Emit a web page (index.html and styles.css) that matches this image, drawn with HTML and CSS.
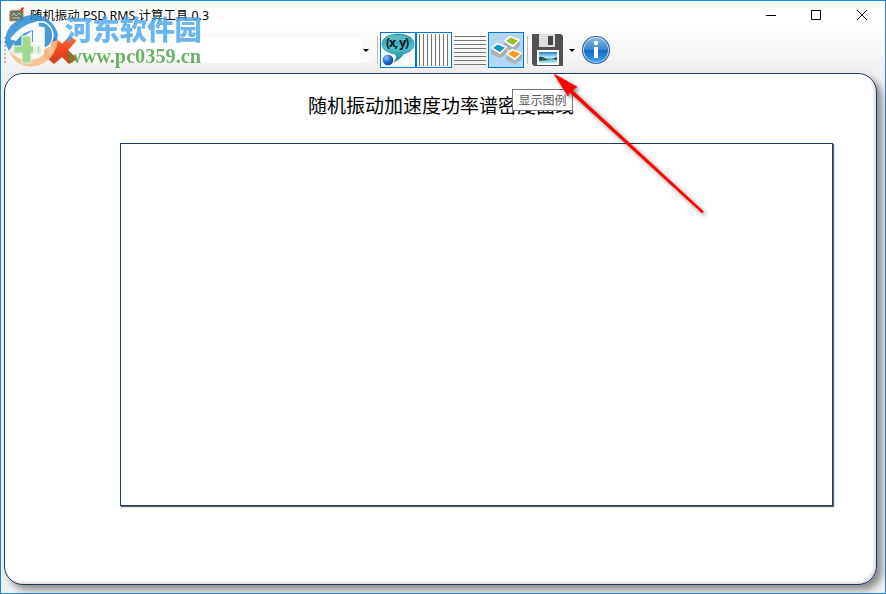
FILE: index.html
```
<!DOCTYPE html>
<html lang="zh-CN">
	<head>
		<meta charset="utf-8">
		<title>随机振动 PSD RMS 计算工具 0.3</title>
		<link rel="stylesheet" href="styles.css">
	</head>
	<body>
		<div class="window">
			<div class="titlebar">
				<svg class="app-icon" width="16" height="16" viewBox="0 0 16 16">
					<path d="M1 4L14 3V13L1 14Z" fill="#617564" stroke="#c27b49"/>
					<path d="M3 9L5 6L7 9L10 6L12 8M3 11H11" fill="none" stroke="#c8d0bb"/>
					<path d="M11 4L13 0L15 1L13 5Z" fill="#e73532"/>
				</svg>
				<svg class="caption" width="184" height="22">
					<text x="0" y="16" textLength="179" lengthAdjust="spacingAndGlyphs">随机振动 PSD RMS 计算工具 0.3</text>
				</svg>
				<svg class="controls" width="138" height="30" viewBox="0 0 138 30" fill="none" stroke="#000">
					<path d="M19 15.5H29M64.500 10.500H73.500V19.500H64.500ZM110 10L120 20M120 10L110 20"/>
				</svg>
			</div>
			<div class="toolbar">
				<div class="grip"></div>
				<svg class="tool" width="36" height="36" viewBox="0 0 36 36">
					<path d="M13 4H22V14H31V22H22V32H13V22H4V14H13Z" fill="#79c65b" stroke="#e7f1df" stroke-width="2"/>
				</svg>
				<svg class="tool" width="36" height="36" viewBox="0 0 36 36">
					<defs>
						<linearGradient id="cross" x2="0" y2="1">
							<stop offset="0" stop-color="#f96b3c"/>
							<stop offset=".5" stop-color="#f04a1c"/>
							<stop offset="1" stop-color="#c53d1c"/>
						</linearGradient>
					</defs>
					<path d="M9 5L17 12L25 4L31 9L23 18L32 27L24 32L17 25L9 32L2 26L10 18L4 11Z" fill="url(#cross)" stroke="#f08c68"/>
				</svg>
				<div class="combo"><i class="arrow"></i></div>
				<div class="separator"></div>
				<div class="tool checked light">
					<svg width="34" height="34" viewBox="0 0 34 34">
						<defs>
							<linearGradient id="bubble" x2="0" y2="1">
								<stop offset="0" stop-color="#2795a6"/>
								<stop offset=".5" stop-color="#52bed0"/>
								<stop offset="1" stop-color="#167d92"/>
							</linearGradient>
							<radialGradient id="ball" cx=".35" cy=".3" r=".7">
								<stop offset="0" stop-color="#8fc7fa"/>
								<stop offset=".45" stop-color="#2f7dd8"/>
								<stop offset="1" stop-color="#0a4596"/>
							</radialGradient>
						</defs>
						<path d="M17 1C26 1 33 5 33 11C33 17 27 20 22 21Q21 25 13 29Q17 24 14 21C6 20 1 16 1 11C1 5 8 1 17 1Z" fill="url(#bubble)" stroke="#2393a6" stroke-width=".7"/>
						<ellipse cx="16" cy="5" rx="11" ry="3" fill="#8bd7e1" opacity=".45"/>
						<text class="coords" x="5" y="14" textLength="23">(x, y)</text>
						<circle cx="7" cy="27" r="5.300" fill="url(#ball)"/>
					</svg>
				</div>
				<div class="tool checked light">
					<svg width="34" height="34" viewBox="0 0 34 34" stroke="#747474">
						<path d="M2.500 1V33M6.500 1V33M10.500 1V33M14.500 1V33M18.500 1V33M22.500 1V33M26.500 1V33M30.500 1V33"/>
					</svg>
				</div>
				<div class="tool">
					<svg width="36" height="36" viewBox="0 0 36 36" stroke="#747474">
						<path d="M2 4.500H34M2 8.500H34M2 12.500H34M2 16.500H34M2 20.500H34M2 24.500H34M2 28.500H34M2 32.500H34"/>
					</svg>
				</div>
				<div class="tool checked">
					<svg width="34" height="34" viewBox="0 0 34 34">
						<defs>
							<g id="tile">
								<path d="M0 5V10Q1 12 9 15Q15 12 16 9V4L9 10Z" fill="#a9b0b2"/>
								<path d="M0 5L6 0L16 4L9 11Z" fill="#fff" stroke="#f2f5f6" stroke-linejoin="round"/>
							</g>
						</defs>
						<use href="#tile" x="15" y="3"/>
						<path d="M17 8L21.500 4.500L29 7.500L24 12Z" fill="#9bbf2c"/>
						<use href="#tile" x="2" y="10"/>
						<path d="M4 15L8.500 11.500L16 14.500L11 19Z" fill="#139bd0"/>
						<use href="#tile" x="17" y="16"/>
						<path d="M19 21L23.500 17.500L31 20.500L26 25Z" fill="#f59a19"/>
					</svg>
				</div>
				<div class="separator"></div>
				<svg class="tool save" width="36" height="36" viewBox="0 0 36 36">
					<defs>
						<linearGradient id="photo" x2="0" y2="1">
							<stop offset="0" stop-color="#287bce"/>
							<stop offset=".5" stop-color="#bfeefa"/>
							<stop offset=".6" stop-color="#62aec4"/>
							<stop offset="1" stop-color="#b3edf1"/>
						</linearGradient>
					</defs>
					<path d="M2 2H31L33 4V34H4L2 32Z" fill="#555153"/>
					<path d="M9 2H25V15H9Z" fill="#dedede"/>
					<path d="M18 4H23V13H18Z" fill="#494749"/>
					<path d="M7 18H29V33H7Z" fill="#fff"/>
					<path d="M9 20H27V31H9Z" fill="url(#photo)"/>
					<path d="M9 25Q13 24 16 27L20 28L9 29ZM22 27L27 25V28Z" fill="#28583e"/>
				</svg>
				<i class="arrow"></i>
				<svg class="tool info" width="36" height="36" viewBox="0 0 36 36">
					<defs>
						<linearGradient id="disc" x2="0" y2="1">
							<stop offset="0" stop-color="#80b4e8"/>
							<stop offset=".48" stop-color="#3b85d0"/>
							<stop offset=".5" stop-color="#1769bd"/>
							<stop offset="1" stop-color="#39a0ed"/>
						</linearGradient>
					</defs>
					<circle cx="18" cy="18" r="13.500" fill="#ddd" stroke="#2869ae" stroke-width="1.200"/>
					<circle cx="18" cy="18" r="12" fill="url(#disc)"/>
					<circle cx="18" cy="11" r="2.200" fill="#fff"/>
					<path d="M16 15H20V26H16Z" fill="#fff"/>
				</svg>
			</div>
			<div class="chart">
				<div class="chart-title">随机振动加速度功率谱密度曲线</div>
				<div class="plot"></div>
			</div>
		</div>

		<!-- site watermark -->
		<svg class="watermark" width="210" height="74" viewBox="0 0 210 74">
			<g class="logo">
				<path d="M5 43Q5 29 15 22Q26 13 38 15Q53 19 58 34Q57 47 49 53Q54 40 49 30Q45 24 38 26V42H32V31L23 37V50H14V43L9 51Z" fill="#288bd3"/>
				<path d="M9 50Q17 61 32 60Q45 58 52 42L58 40Q56 56 44 63Q31 70 18 63Q11 58 9 50Z" fill="#f8bd88"/>
				<path d="M44 32H49V56L44 59Z" fill="#f5ad70"/>
				<path d="M22 36H31V46H38V53H31V63H22V53H14V46H22Z" fill="#a8dc9a" stroke="#e9f4e2"/>
				<path d="M10 39Q20 25 38 21V57H33V30Q23 32 16 41Z" fill="#f5fafc"/>
				<path d="M38 22Q47 20 52 30Q55 38 49 46L44 49V28L38 27Z" fill="#288bd3" stroke="#fff" stroke-width="1.500"/>
			</g>
			<text class="brand" x="65" y="40" textLength="137" lengthAdjust="spacingAndGlyphs">河东软件园</text>
			<text class="url" x="67" y="63" textLength="134" lengthAdjust="spacingAndGlyphs">www.pc0359.cn</text>
		</svg>

		<div class="tooltip">显示图例</div>

		<svg class="pointer" width="180" height="160" viewBox="0 0 180 160">
			<path d="M14 9L37 22L32 25L163.500 146.500L162 148L29.500 27L28 31Z" fill="#f00" stroke="#f00" stroke-width=".6" stroke-linejoin="round"/>
		</svg>
	</body>
</html>
```
FILE: styles.css
```
* {
	box-sizing: border-box;
}

body {
	margin: 0;
	font-family: "Noto Sans", "Noto Sans CJK SC", sans-serif;
	overflow: hidden;
}

.window {
	display: flex;
	flex-direction: column;
	width: 886px;
	height: 594px;
	border: 1px solid #1883d7;
	background: #f0f0f0;
}

.titlebar {
	display: flex;
	flex: none;
	height: 30px;
	background: #fff;
}

.app-icon {
	margin: 6px 0 0 8px;
}

.caption {
	margin: 3px 0 0 5px;
	font-size: 12px;
}

.controls {
	margin: -1px 0 0 auto;
}

.toolbar {
	display: flex;
	flex: none;
	align-items: center;
	height: 38px;
	padding-left: 3px;
	background: linear-gradient(#fcfcfc, #f7f7f7 55%, #f0f0f0);
}

.grip {
	width: 2px;
	height: 27px;
	margin-right: 3px;
	background: repeating-linear-gradient(#bbb 0 2px, transparent 2px 4px);
}

.tool {
	flex: none;
	width: 36px;
	height: 36px;
}

.checked {
	border: 1px solid #0078d7;
	background: #b3d7f3;
}

.checked.light {
	background: #fafafa;
}

.tool svg {
	display: block;
}

.coords {
	font: bold 12px "Open Sans", sans-serif;
	fill: #07161a;
}

.combo {
	display: flex;
	align-items: center;
	justify-content: flex-end;
	width: 288px;
	height: 25px;
	margin-left: 3px;
	padding-right: 3px;
	background: linear-gradient(90deg, #fff 277px, #fafafa 277px);
}

.arrow {
	border: 3px solid transparent;
	border-top-color: #000;
	border-bottom: 0;
}

.separator {
	width: 1px;
	height: 28px;
	margin: 0 2px 0 5px;
	background: #bdbdbd;
}

.checked + .separator {
	margin: 0 2px 0 3px;
}

.save {
	margin-right: 3px;
}

.info {
	margin-left: 3px;
}

.chart {
	width: 873px;
	height: 512px;
	margin: 4px 0 0 3px;
	padding: 18px 43px 0 115px;
	border: 1px solid #1a3b69;
	border-radius: 19px;
	background: #fff;
	box-shadow: 5px 5px 7px rgba(0, 0, 0, .42), inset -2px -2px 3px rgba(0, 0, 0, .14);
}

.chart-title {
	height: 51px;
	margin-left: -52px;
	width: 752px;
	padding-left: 240px;
	font: 19px/26px "Noto Sans CJK SC", sans-serif;
}

.plot {
	width: 713px;
	height: 363px;
	border: 1px solid #1a3b69;
	background: #fff;
	box-shadow: 1px 1px 1px rgba(0, 0, 0, .6);
}

.watermark {
	position: absolute;
	top: 0;
	left: 0;
}

.logo {
	opacity: .85;
}

.brand {
	font: 900 27px "Noto Sans CJK SC", sans-serif;
	fill: #4ba6ee;
	opacity: .82;
}

.url {
	font: bold 20px "Liberation Serif", serif;
	fill: #46a03d;
	opacity: .8;
}

.tooltip {
	position: absolute;
	top: 89px;
	left: 512px;
	width: 61px;
	height: 22px;
	border: 1px solid #767676;
	background: #fff;
	color: #575757;
	font: 12px/19px "Noto Sans CJK SC", sans-serif;
	text-align: center;
}

.pointer {
	position: absolute;
	top: 65px;
	left: 540px;
	filter: drop-shadow(2px 2px 2px rgba(0, 0, 0, .5));
}
```
